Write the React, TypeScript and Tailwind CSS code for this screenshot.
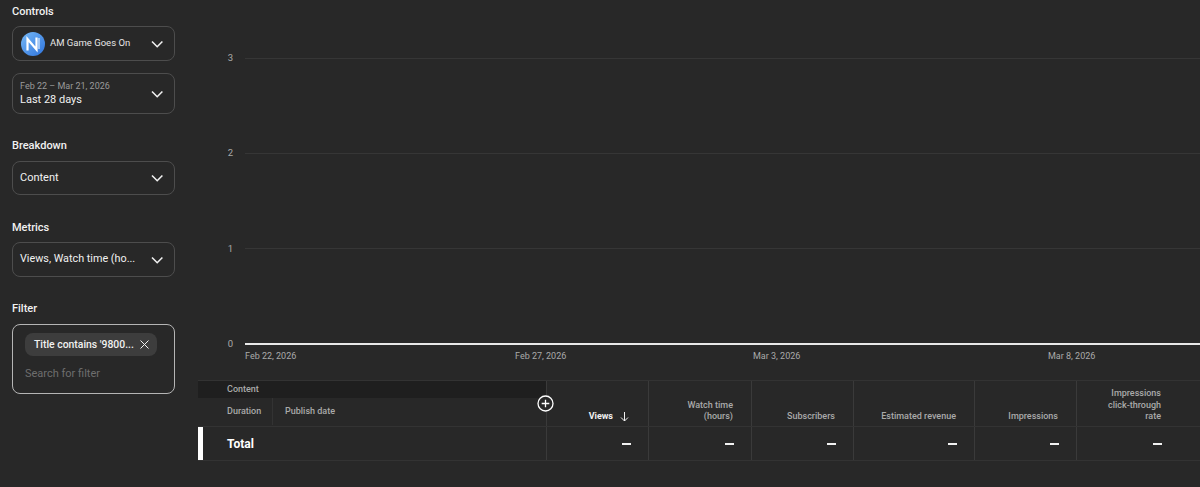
import React from "react";

const Chevron = () => (
  <svg width="13" height="8" viewBox="0 0 13 8" fill="none" className="shrink-0">
    <path d="M2 1.5 7.2 6.7 12.4 1.5" stroke="#f1f1f1" strokeWidth="1.6" />
  </svg>
);

const Label = ({ children, className = "" }: { children: React.ReactNode; className?: string }) => (
  <div className={`text-[11px] leading-[14px] font-medium text-[#f1f1f1] ${className}`}>{children}</div>
);

const Box = ({ children, className = "" }: { children: React.ReactNode; className?: string }) => (
  <div className={`flex items-center justify-between rounded-[8px] border border-[#4d4d4d] pl-2 pr-[11px] ${className}`}>
    {children}
  </div>
);

const Logo = () => (
  <svg width="24" height="24" viewBox="0 0 24 24" className="shrink-0">
    <defs>
      <linearGradient id="lg" x1="0" y1="0" x2="1" y2="1">
        <stop offset="0" stopColor="#76b8f6" />
        <stop offset="1" stopColor="#2f74dd" />
      </linearGradient>
    </defs>
    <circle cx="12" cy="12" r="12" fill="url(#lg)" />
    <path d="M6.5 18.5V7L15.5 17.5V5.5" fill="none" stroke="#fff" strokeWidth="2.2" />
    <path d="M18 6V17" fill="none" stroke="#dfeeff" strokeWidth="1.2" />
  </svg>
);

const YRow = ({ v, strong }: { v: string; strong?: boolean }) => (
  <div className="flex h-3 items-center">
    <div className="w-[36px] pr-[1px] text-right text-[9.5px] leading-3 text-[#aaaaaa]">{v}</div>
    <div className={`ml-[11px] flex-1 ${strong ? "h-[2px] bg-[#e8e8e8]" : "h-px bg-[#363636]"}`} />
  </div>
);

const cols: { label: string[]; w: string; active?: boolean }[] = [
  { label: ["Views"], w: "w-[102px]", active: true },
  { label: ["Watch time", "(hours)"], w: "w-[103px]" },
  { label: ["Subscribers"], w: "w-[102px]" },
  { label: ["Estimated revenue"], w: "w-[121px]" },
  { label: ["Impressions"], w: "w-[102px]" },
  { label: ["Impressions", "click-through", "rate"], w: "w-[103px]" },
];

export default function App() {
  return (
    <div
      className="flex h-[487px] w-full overflow-hidden bg-[#282828] text-[#f1f1f1]"
      style={{ fontFamily: "Roboto, sans-serif" }}
    >
      <aside className="w-[198px] shrink-0 pl-3 pt-[5px]">
        <div className="w-[163px]">
          <Label>Controls</Label>
          <Box className="mt-[7px] h-[35px]">
            <div className="flex items-center gap-[5px]">
              <Logo />
              <span className="text-[9.5px] text-[#e6e6e6]">AM Game Goes On</span>
            </div>
            <Chevron />
          </Box>
          <Box className="mt-3 h-[41px]">
            <div className="-ml-px">
              <div className="text-[9px] leading-[12px] text-[#9a9a9a]">Feb 22 – Mar 21, 2026</div>
              <div className="text-[11px] leading-[15px] text-[#f1f1f1]">Last 28 days</div>
            </div>
            <Chevron />
          </Box>
          <Label className="mt-[25px]">Breakdown</Label>
          <Box className="mt-[8px] h-[34px]">
            <span className="-ml-px text-[11px] text-[#f1f1f1]">Content</span>
            <Chevron />
          </Box>
          <Label className="mt-[26px]">Metrics</Label>
          <Box className="mt-[7px] h-[35px]">
            <span className="-ml-px text-[10.8px] text-[#f1f1f1]">Views, Watch time (ho...</span>
            <Chevron />
          </Box>
          <Label className="mt-[25px]">Filter</Label>
          <div className="mt-[8px] h-[70px] rounded-[8px] border border-[#b5b5b5] pl-3 pt-2">
            <div className="flex h-[23px] w-[132px] items-center justify-between rounded-[8px] bg-[#3d3d3d] pl-[9px] pr-2">
              <span className="text-[10.4px] font-medium text-[#f1f1f1]">Title contains '9800...</span>
              <svg width="9" height="9" viewBox="0 0 9 9" fill="none">
                <path d="M.5.5l8 8M8.5.5l-8 8" stroke="#f1f1f1" strokeWidth="1" />
              </svg>
            </div>
            <div className="mt-[11px] text-[11px] leading-[14px] text-[#6e6e6e]">Search for filter</div>
          </div>
        </div>
      </aside>

      <main className="min-w-0 flex-1 pt-[52px]">
        <div className="flex flex-col gap-[83.33px]">
          <YRow v="3" />
          <YRow v="2" />
          <YRow v="1" />
          <YRow v="0" strong />
        </div>
        <div className="flex h-3 items-center whitespace-nowrap text-[9px] leading-3 text-[#aaaaaa]">
          <span className="ml-[47px] w-[270px]">Feb 22, 2026</span>
          <span className="w-[238px]">Feb 27, 2026</span>
          <span className="w-[295px]">Mar 3, 2026</span>
          <span>Mar 8, 2026</span>
        </div>

        <div className="relative mt-[18px] w-[1060px]">
          <div className="flex h-[47px] border-y border-[#333333]">
            <div className="flex w-[348px] shrink-0 flex-col">
              <div className="flex h-[17px] items-center bg-[#1f1f1f] pl-[29px] text-[9px] font-medium text-[#aaaaaa]">
                Content
              </div>
              <div className="flex flex-1 items-center pb-px text-[9px] font-medium text-[#aaaaaa]">
                <div className="flex h-full w-[75px] items-center border-r border-[#333333] pl-[29px]">Duration</div>
                <div className="pl-[12px]">Publish date</div>
              </div>
            </div>
            {cols.map((c) => (
              <div
                key={c.label.join()}
                className={`${c.w} flex shrink-0 flex-col items-end justify-end border-l border-[#3a3a3a] pb-[3px] ${c.active ? "pr-[17px]" : "pr-[18px]"} text-right text-[9px] font-medium leading-[11.5px] ${c.active ? "text-[#f1f1f1]" : "text-[#aaaaaa]"}`}
              >
                {c.active ? (
                  <div className="flex items-center gap-[7px] pr-[2px]">
                    <span className="font-bold">Views</span>
                    <svg width="9" height="10" viewBox="0 0 9 10" fill="none">
                      <path d="M4.5 0v9M1 5.5 4.5 9 8 5.5" stroke="#f1f1f1" strokeWidth="1" />
                    </svg>
                  </div>
                ) : (
                  c.label.map((l) => <div key={l}>{l}</div>)
                )}
              </div>
            ))}
          </div>

          <div className="flex h-[34px] border-b border-[#333333]">
            <div className="flex w-[348px] shrink-0 items-center">
              <div className="h-full w-[5px] bg-white" />
              <div className="pl-[24px] pt-[2px] text-[12px] font-bold text-white">Total</div>
            </div>
            {cols.map((c) => (
              <div
                key={c.label.join()}
                className={`${c.w} flex shrink-0 items-center justify-end border-l border-[#3a3a3a] pr-[17px] pt-[2px]`}
              >
                <div className="h-[2px] w-[9px] bg-[#f1f1f1]" />
              </div>
            ))}
          </div>

          <svg width="17" height="17" viewBox="0 0 17 17" fill="none" className="absolute left-[339px] top-[15px]">
            <circle cx="8.5" cy="8.5" r="7.5" fill="#282828" stroke="#ffffff" strokeWidth="1.3" />
            <path d="M8.5 4.7v7.6M4.7 8.5h7.6" stroke="#ffffff" strokeWidth="1.3" />
          </svg>
        </div>
      </main>
    </div>
  );
}
